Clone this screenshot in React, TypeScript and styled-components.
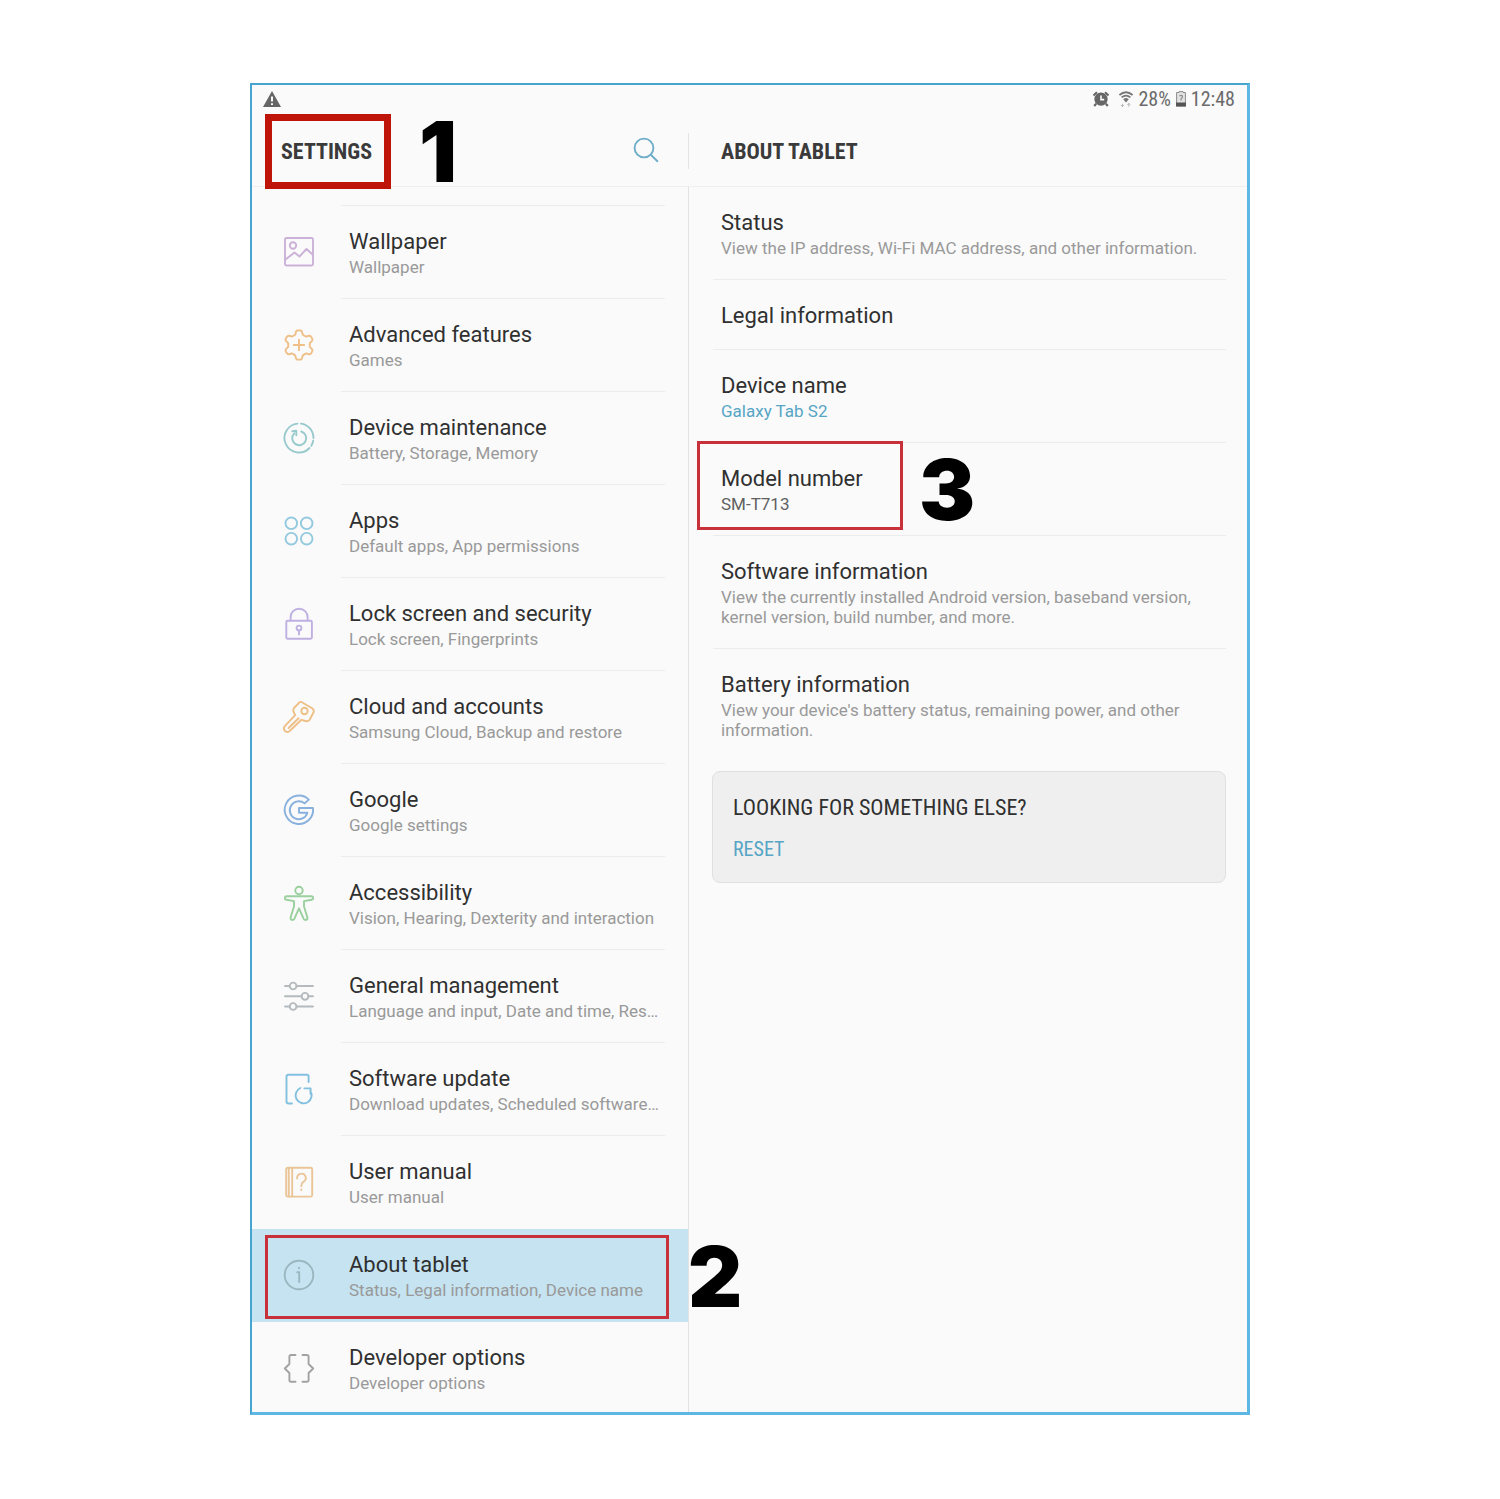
import React from "react";
import styled, { createGlobalStyle, css } from "styled-components";

const condensed = `"Roboto Condensed", "Liberation Sans Narrow", Roboto, sans-serif`;

const GlobalStyle = createGlobalStyle`
  * { box-sizing: border-box; }
  body {
    margin: 0;
    background: #ffffff;
    color: #303030;
    font-family: Roboto, sans-serif;
  }
  h1, h2, h3, p, ul { margin: 0; padding: 0; }
  ul { list-style: none; }
`;

const Page = styled.div`
  padding: 83px 24px 84px;
`;

const Tablet = styled.main`
  max-width: 1000px;
  margin: 0 auto;
  background: #fafafa;
  border: solid #5cb8e2;
  border-width: 2px 3px 3px 2px;
  border-top-color: #45a5cf;
  border-left-color: #45a5cf;
`;

const StatusBar = styled.div`
  display: flex;
  align-items: center;
  justify-content: space-between;
  height: 30px;
  padding: 0 12px 3px 10px;
  color: #6a6a6a;
  font-family: ${condensed};
  font-size: 20px;
  line-height: 24px;
`;

const StatusGroup = styled.div<{ $loose?: boolean }>`
  display: flex;
  align-items: center;
  gap: ${(p) => (p.$loose ? 8 : 4)}px;
`;

const Columns = styled.div`
  display: grid;
  grid-template-columns: 437px minmax(0, 1fr);
`;

const Header = styled(Columns)`
  height: 72px;
  border-bottom: 1px solid #efefef;
`;

const HeaderCell = styled.div<{ $divided?: boolean }>`
  display: flex;
  align-items: center;
  justify-content: space-between;
  height: 36px;
  margin-top: 18px;
  padding: 0 29px;
  ${(p) =>
    p.$divided
      ? css`
          border-right: 1px solid #e4e4e4;
        `
      : css`
          padding: 0 32px;
        `}
`;

const Heading = styled.h1`
  position: relative;
  padding-top: 2px;
  color: #3a3a3a;
  font-family: ${condensed};
  font-size: 22px;
  font-weight: 700;
  line-height: 28px;
`;

const SearchButton = styled.button`
  display: flex;
  padding: 0 0 2px;
  border: 0;
  background: none;
  color: #6fadc8;
  cursor: pointer;
`;

const Sidebar = styled.nav`
  border-right: 1px solid #e2e2e2;
`;

const SidebarTop = styled.div`
  height: 19px;
  margin: 0 23px 0 89px;
  border-bottom: 1px solid #ececec;
`;

const rowText = css`
  padding: 22px 8px 19px;
  border-bottom: 1px solid #ececec;
`;

const MenuLink = styled.a<{ $selected?: boolean }>`
  position: relative;
  display: grid;
  grid-template-columns: 32px minmax(0, 1fr);
  column-gap: 26px;
  align-items: start;
  padding: 0 23px 0 31px;
  color: inherit;
  text-decoration: none;
  background: ${(p) => (p.$selected ? "#c5e3f0" : "transparent")};
`;

const MenuText = styled.div<{ $plain?: boolean }>`
  ${rowText}
  padding-right: 4px;
  ${(p) => p.$plain && "border-bottom-color: transparent;"}
`;

const MenuItem = styled.li`
  &:last-child ${MenuText} {
    padding-bottom: 17px;
    border-bottom: 0;
  }
`;

const ItemTitle = styled.h2`
  font-size: 22px;
  font-weight: 400;
  line-height: 28px;
`;

const ItemNote = styled.p<{ $tone?: "link" | "dark" }>`
  margin: 1px 0 2px;
  font-size: 17px;
  line-height: 20px;
  color: ${(p) =>
    p.$tone === "link" ? "#56a5c5" : p.$tone === "dark" ? "#606060" : "#999999"};
`;

const MenuNote = styled(ItemNote)`
  white-space: nowrap;
`;

const Details = styled.section`
  padding: 0 21px 24px 24px;
`;

const DetailItem = styled.li`
  position: relative;
  ${rowText}
  &:last-child {
    border-bottom: 0;
  }
`;

const Card = styled.aside`
  display: flex;
  flex-direction: column;
  align-items: flex-start;
  gap: 15px;
  margin: 10px 0 0 -1px;
  padding: 22px 20px 21px;
  border: 1px solid #e0e0e0;
  border-radius: 8px;
  background: #efefef;
`;

const CardTitle = styled.h3`
  font-family: ${condensed};
  font-size: 22px;
  font-weight: 400;
  line-height: 28px;
`;

const CardLink = styled.a`
  color: #56a5c5;
  font-family: ${condensed};
  font-size: 20px;
  line-height: 24px;
  text-decoration: none;
`;

const Outline = styled.span`
  position: absolute;
  z-index: 1;
  border: 3px solid #c8303a;
  pointer-events: none;
`;

const HeadingOutline = styled(Outline)`
  inset: -22px -19px -23px -16px;
  border: 7px solid #be1409;
`;

const MenuOutline = styled(Outline)`
  inset: 6px 19px 3px 13px;
`;

const DetailOutline = styled(Outline)`
  inset: -2px auto 5px -16px;
  width: 206px;
`;

const Step = styled.span`
  position: absolute;
  z-index: 1;
  color: #000000;
  font-family: Inter, sans-serif;
  font-size: 84px;
  font-weight: 900;
  line-height: 84px;
  pointer-events: none;
`;

const HeadingStep = styled(Step)`
  top: -26px;
  left: 138px;
`;

const MenuStep = styled(Step)`
  top: 6px;
  left: 100%;
`;

const DetailStep = styled(Step)`
  top: 5px;
  left: 206px;
`;

const Drawing = styled.svg`
  display: block;
  flex: none;
  overflow: visible;
  fill: none;
  stroke: currentColor;
  stroke-width: 1.9;
  stroke-linecap: round;
  stroke-linejoin: round;
`;

const MenuIcon = styled(Drawing)`
  margin-top: 30px;
`;

const Icon = ({ color, children }: { color: string; children: React.ReactNode }) => (
  <MenuIcon width="32" height="32" viewBox="0 0 32 32" color={color} aria-hidden="true">
    {children}
  </MenuIcon>
);

const gear = (() => {
  const points: string[] = [];
  for (let i = 0; i <= 120; i++) {
    const a = (i / 120) * Math.PI * 2;
    const wave = Math.cos(6 * a);
    const r = 12.7 + 2 * Math.tanh(2.2 * wave);
    points.push(`${(16 + r * Math.sin(a)).toFixed(2)} ${(16 - r * Math.cos(a)).toFixed(2)}`);
  }
  return `M${points.join("L")}Z`;
})();

const menu = [
  {
    title: "Wallpaper",
    note: "Wallpaper",
    color: "#cbb1d8",
    art: (
      <>
        <rect x="2" y="2" width="28" height="27.5" rx="1.5" />
        <circle cx="10" cy="9.5" r="3.2" />
        <path d="M2.5 23.5 11.5 16.5 16.5 20.5 23.5 13 29.5 18.5" />
      </>
    ),
  },
  {
    title: "Advanced features",
    note: "Games",
    color: "#efbf88",
    art: (
      <>
        <path d={gear} />
        <path d="M16 10.8v10.4M10.8 16h10.4" />
      </>
    ),
  },
  {
    title: "Device maintenance",
    note: "Battery, Storage, Memory",
    color: "#98cacd",
    art: (
      <>
        <path d="M14.5 1.6A14.5 14.5 0 1 0 26.5 26" />
        <path d="M18 1.6A14.5 14.5 0 0 1 30.5 16M30.2 18.7A14.5 14.5 0 0 1 28.3 23.7" />
        <path d="M18.3 9.5A7 7 0 1 1 11.2 11.3M9.3 9.2 13.3 8.8V13.2" />
      </>
    ),
  },
  {
    title: "Apps",
    note: "Default apps, App permissions",
    color: "#93c9df",
    art: (
      <>
        <circle cx="8.3" cy="8.3" r="5.8" />
        <circle cx="23.7" cy="8.3" r="5.8" />
        <circle cx="8.3" cy="23.7" r="5.8" />
        <circle cx="23.7" cy="23.7" r="5.8" />
      </>
    ),
  },
  {
    title: "Lock screen and security",
    note: "Lock screen, Fingerprints",
    color: "#bfb0e2",
    art: (
      <>
        <rect x="3.3" y="12.8" width="25.6" height="18" rx="1.2" />
        <path d="M7.6 12.5V9.2A8.5 8.5 0 0 1 24.6 9.2V12.5M16 22.4V26.5" />
        <circle cx="16" cy="20" r="2.4" />
      </>
    ),
  },
  {
    title: "Cloud and accounts",
    note: "Samsung Cloud, Backup and restore",
    color: "#efbf88",
    art: (
      <>
        <path d="M18.5 1 29.5 7.5Q31.3 9 30.7 11L26.5 19Q25 21 22.5 20L18.4 18.8 6.4 30.2Q4 31.8 1.7 29.8 0 27.5 1.8 25.2L12.2 14.2 10.6 10.6Q9.8 8.6 11 7L16 1.8Q17.3.6 18.5 1Z" />
        <path d="M15.6 17.2 5.6 27" />
        <circle cx="21.5" cy="10" r="3.2" />
      </>
    ),
  },
  {
    title: "Google",
    note: "Google settings",
    color: "#88b1de",
    art: <path d="M25.8 5.6A14.2 14.2 0 1 0 30 14H16V18.8H24.4A9 9 0 1 1 21.6 9.4Z" />,
  },
  {
    title: "Accessibility",
    note: "Vision, Hearing, Dexterity and interaction",
    color: "#9ad09e",
    art: (
      <>
        <circle cx="16" cy="3.5" r="3.7" />
        <path d="M3.5 9.3H28.5Q30.2 9.5 30.2 11.2 30.2 12.5 28.5 12.8L21 14.1V19.5L24.4 30.5Q24.6 32.5 23 32.9 21.4 33.1 20.6 31.7L16 21.3 11.4 31.7Q10.6 33.1 9 32.9 7.4 32.5 7.6 30.5L11 19.5V14.1L3.5 12.8Q1.8 12.5 1.8 11.2 1.8 9.5 3.5 9.3Z" />
      </>
    ),
  },
  {
    title: "General management",
    note: "Language and input, Date and time, Res…",
    color: "#b4babd",
    art: (
      <>
        <path d="M2 6H6.6M13.6 6H30M2 16.3H18.4M25.4 16.3H30M2 26.5H6.6M13.6 26.5H30" />
        <circle cx="10.1" cy="6" r="3.4" />
        <circle cx="22" cy="16.3" r="3.4" />
        <circle cx="10.1" cy="26.5" r="3.4" />
      </>
    ),
  },
  {
    title: "Software update",
    note: "Download updates, Scheduled software…",
    color: "#82c0df",
    art: (
      <>
        <path d="M9 30.5H5.6Q3.5 30.5 3.5 28.5V3.4Q3.5 1.8 5.2 1.8H24Q25.6 1.8 25.6 3.4V9" />
        <path d="M17.4 15A8 8 0 1 0 27.2 17.8M21.4 15.4H27.6V21" />
      </>
    ),
  },
  {
    title: "User manual",
    note: "User manual",
    color: "#eac598",
    art: (
      <>
        <rect x="3.2" y="1.8" width="26" height="28.8" rx="1.5" />
        <path d="M5.8 2V30.4M9.2 2V30.4" />
        <path d="M14.2 12.6A4.3 4.3 0 1 1 20.4 15.8Q18.3 17.4 18.3 20.2M18.3 23.4V24" />
      </>
    ),
  },
  {
    title: "About tablet",
    note: "Status, Legal information, Device name",
    color: "#9cb6c0",
    selected: true,
    art: (
      <>
        <circle cx="16" cy="16" r="14.3" />
        <path d="M14.3 13.2H16.2V23M16 8.6V9.2" />
      </>
    ),
  },
  {
    title: "Developer options",
    note: "Developer options",
    color: "#a2a2a2",
    art: (
      <path d="M12.5 3H8.2Q6.4 3 6.4 4.8V12L1.8 16.5 6.4 21V28Q6.4 29.8 8.2 29.8H12.5M19.5 3H23.8Q25.6 3 25.6 4.8V12L30.2 16.5 25.6 21V28Q25.6 29.8 23.8 29.8H19.5" />
    ),
  },
];

type Detail = { title: string; note?: string; tone?: "link" | "dark"; marked?: boolean };

const details: Detail[] = [
  { title: "Status", note: "View the IP address, Wi-Fi MAC address, and other information." },
  { title: "Legal information" },
  { title: "Device name", note: "Galaxy Tab S2", tone: "link" },
  { title: "Model number", note: "SM-T713", tone: "dark", marked: true },
  {
    title: "Software information",
    note: "View the currently installed Android version, baseband version, kernel version, build number, and more.",
  },
  {
    title: "Battery information",
    note: "View your device's battery status, remaining power, and other information.",
  },
];

const WarningIcon = () => (
  <svg width="20" height="18" viewBox="0 0 20 18" role="img" aria-label="Warning">
    <path d="M10 1 19 17H1Z" fill="#666666" />
    <path d="M10 6.5V11.5M10 13.3V15" stroke="#fafafa" strokeWidth="2" />
  </svg>
);

const AlarmIcon = () => (
  <svg width="18" height="16" viewBox="0 0 18 16" role="img" aria-label="Alarm set">
    <circle cx="9" cy="8.2" r="6.6" fill="#666666" />
    <path d="M1.5 4.5 5 1.3M16.5 4.5 13 1.3M4.2 12.6 2.2 15M13.8 12.6 15.8 15" stroke="#666666" strokeWidth="2.2" />
    <path d="M9 4.6V8.6H12.2" fill="none" stroke="#fafafa" strokeWidth="1.6" />
  </svg>
);

const WifiIcon = () => (
  <svg width="16" height="16" viewBox="0 0 16 16" role="img" aria-label="Wi-Fi">
    <g fill="none" stroke="#777777" strokeWidth="1.8">
      <path d="M1.4 4Q8-1.6 14.6 4" />
      <path d="M3.6 6.4Q8 2.8 12.4 6.4" />
    </g>
    <path d="M5.2 8.2Q8 6 10.8 8.2L8 11.6Z" fill="#777777" />
    <path d="M4.4 15.6V12.8M3 14.2 4.4 15.6 5.8 14.2M10.8 15.6V12.4M9.4 13.8 10.8 12.4 12.2 13.8" fill="none" stroke="#b0b0b0" />
  </svg>
);

const BatteryIcon = () => (
  <svg width="12" height="16" viewBox="0 0 12 16" role="img" aria-label="Battery">
    <path d="M4 1.5V.6H8V1.5H10.4V15H1.6V1.5Z" fill="#e2e2e2" stroke="#8c8c8c" />
    <path d="M1 11.5H11V15.5H1Z" fill="#555555" />
    <path d="M4.5 5.2Q6 3.6 7.4 5 8 6.6 6 7.8V9.6" fill="none" stroke="#8c8c8c" strokeWidth="1.2" />
  </svg>
);

export default function App() {
  return (
    <>
      <GlobalStyle />
      <Page>
        <Tablet>
          <StatusBar>
            <WarningIcon />
            <StatusGroup $loose>
              <AlarmIcon />
              <StatusGroup>
                <WifiIcon />
                <span>28%</span>
                <BatteryIcon />
                <span>12:48</span>
              </StatusGroup>
            </StatusGroup>
          </StatusBar>
          <Header>
            <HeaderCell $divided>
              <Heading>
                SETTINGS
                <HeadingOutline />
                <HeadingStep>1</HeadingStep>
              </Heading>
              <SearchButton type="button" aria-label="Search">
                <Drawing width="26" height="26" viewBox="0 0 26 26" strokeWidth="2">
                  <circle cx="11" cy="11" r="9.4" />
                  <path d="M17.8 17.8 24.4 24.2" />
                </Drawing>
              </SearchButton>
            </HeaderCell>
            <HeaderCell>
              <Heading as="h2">ABOUT TABLET</Heading>
            </HeaderCell>
          </Header>
          <Columns>
            <Sidebar aria-label="Settings">
              <SidebarTop />
              <ul>
                {menu.map((item) => (
                  <MenuItem key={item.title}>
                    <MenuLink
                      href="#"
                      $selected={item.selected}
                      aria-current={item.selected ? "page" : undefined}
                    >
                      <Icon color={item.color}>{item.art}</Icon>
                      <MenuText $plain={item.selected || item.title === "User manual"}>
                        <ItemTitle>{item.title}</ItemTitle>
                        <MenuNote>{item.note}</MenuNote>
                      </MenuText>
                      {item.selected && (
                        <>
                          <MenuOutline />
                          <MenuStep>2</MenuStep>
                        </>
                      )}
                    </MenuLink>
                  </MenuItem>
                ))}
              </ul>
            </Sidebar>
            <Details>
              <ul>
                {details.map((item) => (
                  <DetailItem key={item.title}>
                    <ItemTitle>{item.title}</ItemTitle>
                    {item.note && <ItemNote $tone={item.tone}>{item.note}</ItemNote>}
                    {item.marked && (
                      <>
                        <DetailOutline />
                        <DetailStep>3</DetailStep>
                      </>
                    )}
                  </DetailItem>
                ))}
              </ul>
              <Card>
                <CardTitle>LOOKING FOR SOMETHING ELSE?</CardTitle>
                <CardLink href="#">RESET</CardLink>
              </Card>
            </Details>
          </Columns>
        </Tablet>
      </Page>
    </>
  );
}
